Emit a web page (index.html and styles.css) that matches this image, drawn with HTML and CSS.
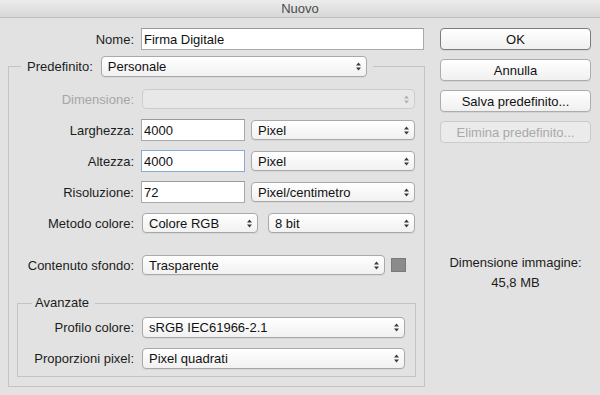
FILE: index.html
```html
<!DOCTYPE html>
<html>
<head>
<title>Nuovo</title>
<link rel="stylesheet" href="styles.css">
</head>
<body>

<div class="window">
  <div class="titlebar">Nuovo</div>
  <div class="dialog">
    <div class="main">
      <div class="row">
        <label class="label" for="docName">Nome:</label>
        <input type="text" id="docName" class="field name-field" value="Firma Digitale">
      </div>

      <fieldset class="group">
        <legend class="group-legend">
          <span class="legend-label">Predefinito:</span>
          <span class="select preset-select">
            <span class="select-text">Personale</span>
            <svg class="arrows" width="5" height="9" viewBox="0 0 5 9"><path d="M0 3.6L2.5 0.4L5 3.6Z M0 5.4L2.5 8.6L5 5.4Z"/></svg>
          </span>
        </legend>

        <div class="row">
          <span class="label disabled">Dimensione:</span>
          <span class="select size-select disabled">
            <span class="select-text"></span>
            <svg class="arrows" width="5" height="9" viewBox="0 0 5 9"><path d="M0 3.6L2.5 0.4L5 3.6Z M0 5.4L2.5 8.6L5 5.4Z"/></svg>
          </span>
        </div>
        <div class="row">
          <label class="label" for="width">Larghezza:</label>
          <input type="text" id="width" class="field num-field" value="4000">
          <span class="select unit-select">
            <span class="select-text">Pixel</span>
            <svg class="arrows" width="5" height="9" viewBox="0 0 5 9"><path d="M0 3.6L2.5 0.4L5 3.6Z M0 5.4L2.5 8.6L5 5.4Z"/></svg>
          </span>
        </div>
        <div class="row">
          <label class="label" for="height">Altezza:</label>
          <input type="text" id="height" class="field num-field focused" value="4000">
          <span class="select unit-select">
            <span class="select-text">Pixel</span>
            <svg class="arrows" width="5" height="9" viewBox="0 0 5 9"><path d="M0 3.6L2.5 0.4L5 3.6Z M0 5.4L2.5 8.6L5 5.4Z"/></svg>
          </span>
        </div>
        <div class="row">
          <label class="label" for="resolution">Risoluzione:</label>
          <input type="text" id="resolution" class="field num-field" value="72">
          <span class="select unit-select">
            <span class="select-text">Pixel/centimetro</span>
            <svg class="arrows" width="5" height="9" viewBox="0 0 5 9"><path d="M0 3.6L2.5 0.4L5 3.6Z M0 5.4L2.5 8.6L5 5.4Z"/></svg>
          </span>
        </div>
        <div class="row">
          <span class="label">Metodo colore:</span>
          <span class="select mode-select">
            <span class="select-text">Colore RGB</span>
            <svg class="arrows" width="5" height="9" viewBox="0 0 5 9"><path d="M0 3.6L2.5 0.4L5 3.6Z M0 5.4L2.5 8.6L5 5.4Z"/></svg>
          </span>
          <span class="select depth-select">
            <span class="select-text">8 bit</span>
            <svg class="arrows" width="5" height="9" viewBox="0 0 5 9"><path d="M0 3.6L2.5 0.4L5 3.6Z M0 5.4L2.5 8.6L5 5.4Z"/></svg>
          </span>
        </div>
        <div class="row spaced">
          <span class="label">Contenuto sfondo:</span>
          <span class="select bg-select">
            <span class="select-text">Trasparente</span>
            <svg class="arrows" width="5" height="9" viewBox="0 0 5 9"><path d="M0 3.6L2.5 0.4L5 3.6Z M0 5.4L2.5 8.6L5 5.4Z"/></svg>
          </span>
          <span class="swatch"></span>
        </div>

        <fieldset class="subgroup">
          <legend class="subgroup-legend">Avanzate</legend>
          <div class="row">
            <span class="label">Profilo colore:</span>
            <span class="select wide-select">
              <span class="select-text">sRGB IEC61966-2.1</span>
              <svg class="arrows" width="5" height="9" viewBox="0 0 5 9"><path d="M0 3.6L2.5 0.4L5 3.6Z M0 5.4L2.5 8.6L5 5.4Z"/></svg>
            </span>
          </div>
          <div class="row">
            <span class="label">Proporzioni pixel:</span>
            <span class="select wide-select">
              <span class="select-text">Pixel quadrati</span>
              <svg class="arrows" width="5" height="9" viewBox="0 0 5 9"><path d="M0 3.6L2.5 0.4L5 3.6Z M0 5.4L2.5 8.6L5 5.4Z"/></svg>
            </span>
          </div>
        </fieldset>
      </fieldset>
    </div>

    <div class="side">
      <button class="button default">OK</button>
      <button class="button">Annulla</button>
      <button class="button">Salva predefinito...</button>
      <button class="button" disabled>Elimina predefinito...</button>
      <div class="info">
        <div>Dimensione immagine:</div>
        <div>45,8 MB</div>
      </div>
    </div>
  </div>
</div>

</body>
</html>
```

FILE: styles.css
```css
body {
  margin: 0;
  font-family: "Liberation Sans", Arial, sans-serif;
  font-size: 13px;
  color: #1c1c1c;
  background-color: #e2e2e2;
}
.window {
  width: 600px;
  height: 395px;
  overflow: hidden;
  background-color: #e2e2e2;
}
.titlebar {
  height: 17px;
  line-height: 17px;
  text-align: center;
  color: #4b4b4b;
  background: linear-gradient(#ececec, #d8d8d8);
  border-bottom: 1px solid #bdbdbd;
}
.dialog {
  display: flex;
  padding: 10px 0 0 8px;
}
.main {
  width: 417px;
}
.side {
  width: 151px;
  margin-left: 15px;
  display: flex;
  flex-direction: column;
  gap: 9px;
}

/* form rows */
.row {
  display: flex;
  align-items: center;
  height: 22px;
}
.row + .row {
  margin-top: 9px;
}
.row.spaced {
  margin-top: 20px;
}
.label {
  flex: none;
  text-align: right;
  margin-right: 7px;
  white-space: nowrap;
}
.label.disabled {
  color: #a6a6a6;
}
.main > .row > .label {
  width: 126px;
}
.group > .row > .label {
  width: 117px;
}
.subgroup > .row > .label {
  width: 108px;
}

/* group boxes */
.group {
  width: 417px;
  min-width: 0;
  box-sizing: border-box;
  margin: 6px 0 0;
  padding: 11px 8px 9px;
  border: 1px solid #c4c4c4;
}
.group-legend {
  display: flex;
  align-items: center;
  margin-left: 4px;
  padding: 0 6px;
}
.legend-label {
  margin-right: 8px;
}
.subgroup {
  min-width: 0;
  margin: 19px 0 0;
  padding: 5px 8px 7px;
  border: 1px solid #c4c4c4;
}
.subgroup-legend {
  margin-left: 6px;
  padding: 0 6px 0 3px;
  line-height: 16px;
}

/* text fields */
.field {
  box-sizing: border-box;
  height: 22px;
  margin: 0;
  padding: 0 2px;
  font: inherit;
  color: #111;
  background-color: #fff;
  border: 1px solid #a9a9a9;
  border-top-color: #9a9a9a;
  outline: none;
}
.field.focused {
  border-color: #86abd9;
}
.name-field {
  width: 283px;
}
.num-field {
  width: 104px;
  margin-right: 6px;
}

/* popup selects */
.select {
  box-sizing: border-box;
  display: flex;
  align-items: center;
  height: 20px;
  padding: 0 5px 0 6px;
  border: 1px solid #a9a9a9;
  border-radius: 4px;
  background: linear-gradient(#ffffff, #f1f1f1);
  box-shadow: 0 1px 0 rgba(0, 0, 0, 0.05);
  color: #111;
  flex: none;
}
.select-text {
  flex: 1;
  white-space: nowrap;
}
.arrows {
  fill: #3a3a3a;
}
.select.disabled {
  background: #e8e8e8;
  border-color: #cdcdcd;
  box-shadow: none;
}
.select.disabled .arrows {
  fill: #b0b0b0;
}
.preset-select {
  width: 266px;
  height: 21px;
}
.size-select {
  width: 273px;
  margin-left: 1px;
}
.unit-select {
  width: 164px;
}
.mode-select {
  width: 116px;
  margin-left: 1px;
  margin-right: 10px;
}
.depth-select {
  width: 147px;
}
.bg-select {
  width: 243px;
  margin-left: 1px;
  margin-right: 6px;
}
.wide-select {
  width: 263px;
  height: 21px;
  margin-left: 1px;
}
.swatch {
  box-sizing: border-box;
  width: 15px;
  height: 14px;
  background-color: #8b8b8b;
  border: 1px solid #7a7a7a;
}

/* buttons */
.button {
  box-sizing: border-box;
  height: 22px;
  padding: 0;
  font: inherit;
  color: #111;
  border: 1px solid #acacac;
  border-radius: 4px;
  background: linear-gradient(#ffffff, #f0f0f0);
  box-shadow: 0 1px 0 rgba(0, 0, 0, 0.06);
}
.button.default {
  border-color: #7c7c7c;
}
.button:disabled {
  color: #a9a9a9;
  background: #ebebeb;
  border-color: #cbcbcb;
  box-shadow: none;
}
.info {
  margin-top: 101px;
  text-align: center;
  line-height: 20px;
}
```
